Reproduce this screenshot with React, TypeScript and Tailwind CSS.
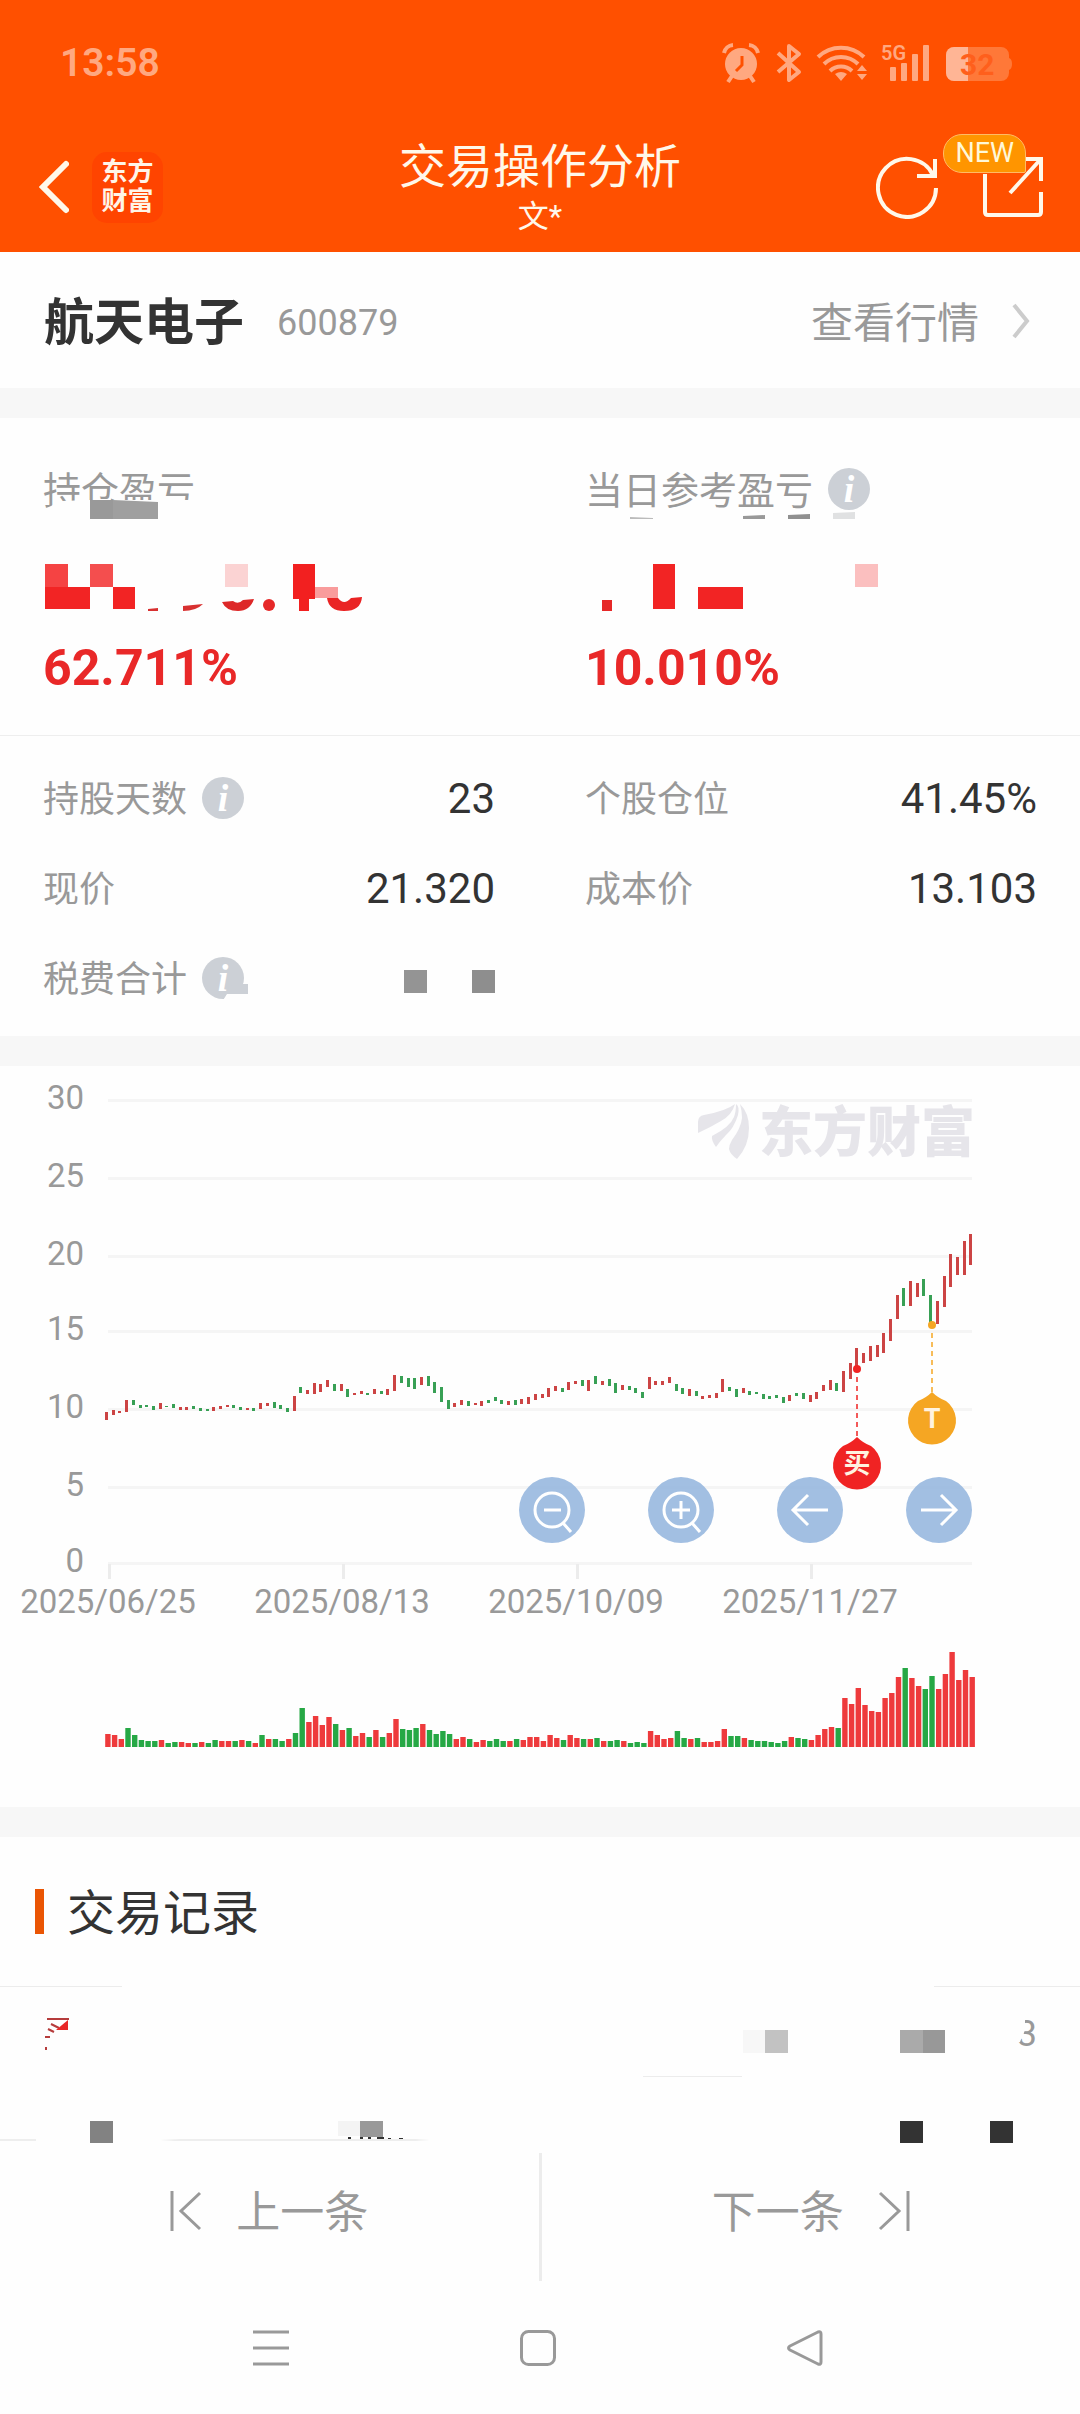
import { useState } from "react";
import type { ReactNode } from "react";

type Candle = [top: number, bottom: number, up: 0 | 1];
type Volume = [height: number, up: 0 | 1];

const CANDLES: Candle[] = [
  [346, 354, 1], [344, 349, 1], [345, 347, 1], [334, 346, 1], [334, 339, 0], [339, 342, 0], [339, 341, 0], [340, 344, 0], [337, 343, 1], [340, 341, 0],
  [338, 342, 0], [341, 344, 1], [341, 344, 1], [340, 343, 0], [342, 345, 0], [343, 345, 0], [341, 345, 1], [340, 343, 1], [339, 341, 1], [339, 342, 0],
  [341, 344, 0], [342, 344, 1], [342, 345, 0], [337, 343, 1], [337, 340, 1], [336, 342, 0], [339, 343, 0], [342, 346, 0], [330, 345, 1], [321, 327, 0],
  [324, 328, 1], [317, 328, 1], [318, 326, 1], [314, 321, 1], [318, 325, 0], [318, 325, 1], [323, 331, 0], [327, 329, 1], [325, 328, 1], [327, 329, 0],
  [323, 328, 1], [325, 328, 0], [323, 329, 1], [309, 325, 1], [310, 317, 0], [312, 321, 0], [312, 323, 0], [311, 319, 1], [310, 320, 0], [316, 327, 0],
  [321, 336, 0], [334, 343, 0], [337, 341, 1], [334, 339, 1], [335, 340, 0], [337, 339, 1], [335, 340, 1], [334, 337, 0], [331, 335, 0], [334, 338, 0],
  [335, 339, 1], [334, 339, 0], [333, 338, 1], [331, 338, 1], [328, 334, 1], [328, 332, 1], [322, 331, 1], [320, 325, 1], [322, 326, 0], [316, 324, 1],
  [315, 318, 1], [314, 320, 0], [314, 325, 1], [310, 318, 0], [315, 319, 1], [313, 320, 0], [317, 327, 0], [319, 324, 1], [320, 324, 0], [322, 327, 0],
  [326, 332, 0], [311, 323, 1], [315, 319, 1], [315, 319, 1], [311, 317, 1], [318, 325, 0], [322, 328, 0], [323, 330, 1], [325, 330, 0], [330, 333, 1],
  [329, 332, 1], [327, 332, 1], [313, 326, 1], [321, 325, 0], [323, 331, 0], [322, 327, 1], [325, 329, 0], [326, 328, 0], [328, 333, 0], [330, 333, 0],
  [329, 332, 0], [331, 337, 0], [329, 335, 1], [327, 330, 0], [327, 333, 0], [329, 336, 1], [326, 333, 1], [319, 325, 1], [314, 324, 1], [317, 325, 0],
  [305, 326, 1], [297, 313, 1], [282, 302, 1], [287, 297, 1], [280, 295, 1], [279, 291, 1], [267, 287, 1], [253, 275, 1], [229, 253, 1], [222, 240, 0],
  [215, 240, 1], [217, 231, 1], [213, 230, 0], [229, 256, 0], [235, 258, 1], [210, 241, 1], [188, 221, 1], [191, 209, 1], [175, 209, 1], [168, 199, 1],
];

const VOLUMES: Volume[] = [
  [13, 1], [12, 1], [8, 1], [19, 0], [12, 0], [7, 0], [6, 0], [6, 0], [7, 1], [4, 0],
  [5, 0], [5, 1], [4, 1], [4, 0], [5, 1], [4, 0], [7, 0], [6, 1], [6, 1], [6, 0],
  [7, 1], [6, 0], [4, 1], [12, 0], [8, 1], [8, 0], [6, 0], [8, 1], [14, 0], [39, 0],
  [25, 1], [31, 1], [22, 1], [30, 1], [23, 0], [17, 1], [19, 0], [11, 1], [14, 1], [10, 0],
  [17, 1], [10, 0], [14, 1], [28, 1], [18, 0], [17, 0], [19, 0], [23, 1], [17, 0], [13, 0],
  [16, 0], [13, 0], [8, 1], [10, 1], [8, 0], [5, 1], [7, 1], [6, 0], [8, 0], [6, 0],
  [6, 1], [8, 0], [7, 1], [10, 1], [10, 1], [6, 1], [12, 1], [9, 1], [7, 0], [12, 1],
  [9, 1], [8, 0], [8, 1], [9, 0], [6, 1], [6, 0], [7, 0], [6, 1], [4, 0], [5, 0],
  [4, 0], [16, 1], [12, 1], [8, 1], [9, 1], [16, 0], [9, 0], [8, 1], [9, 0], [5, 1],
  [5, 1], [6, 1], [18, 1], [11, 0], [11, 0], [9, 1], [7, 0], [6, 0], [6, 0], [5, 0],
  [4, 0], [6, 0], [10, 1], [9, 0], [8, 0], [7, 1], [12, 1], [18, 1], [20, 1], [19, 0],
  [49, 1], [43, 1], [59, 1], [42, 1], [36, 1], [35, 1], [49, 1], [54, 1], [70, 1], [79, 0],
  [69, 1], [61, 1], [58, 0], [71, 0], [58, 1], [73, 1], [95, 1], [67, 1], [77, 1], [70, 1],
];

const GRID = [
  { label: "30", y: 34 },
  { label: "25", y: 112 },
  { label: "20", y: 190 },
  { label: "15", y: 265 },
  { label: "10", y: 343 },
  { label: "5", y: 421 },
  { label: "0", y: 497 },
];

const DATES = [
  { label: "2025/06/25", x: 109 },
  { label: "2025/08/13", x: 343 },
  { label: "2025/10/09", x: 577 },
  { label: "2025/11/27", x: 811 },
];

const STEP = 6.7;

function StatusBar() {
  return (
    <div className="flex h-[126px] items-center justify-between pl-[60px] pr-[67px] text-[#ffa880]">
      <span className="text-[39px] font-semibold leading-[40px]">13:58</span>
      <svg viewBox="722 44 291 38" className="h-[38px] w-[291px] overflow-visible" fill="currentColor" aria-hidden="true">
        {/* alarm */}
        <circle cx="741" cy="64" r="16" />
        <path d="M724 53a10 10 0 0 1 9-8M758 53a10 10 0 0 0-9-8M732 76l-4 6M750 76l4 6" fill="none" stroke="currentColor" strokeWidth="4" />
        <path d="M742 56v9l-6 6" fill="none" stroke="#ff5000" strokeWidth="3" />
        {/* bluetooth */}
        <path d="M778 53l21 19-10 8V46l10 8-21 18" fill="none" stroke="currentColor" strokeWidth="4" strokeLinejoin="round" />
        {/* wifi */}
        <path d="M818 57a33 33 0 0 1 46 0M824 64a24 24 0 0 1 34 0M830 71a16 16 0 0 1 22 0" fill="none" stroke="currentColor" strokeWidth="4" />
        <path d="M835 74q6-4 12 0l-6 7zM857 71l5-6 5 6zM857 74l5 6 5-6z" />
        {/* signal */}
        <text x="881" y="60" className="text-[20px] font-semibold">5G</text>
        <rect x="890" y="67" width="6" height="14" rx="1" />
        <rect x="901" y="63" width="6" height="18" rx="1" />
        <rect x="912" y="54" width="6" height="27" rx="1" />
        <rect x="923" y="45" width="6" height="36" rx="1" />
        {/* battery */}
        <path d="M954 47h47a8 8 0 0 1 8 8v3q3 1 3 6t-3 6v3a8 8 0 0 1-8 8h-47a8 8 0 0 1-8-8V55a8 8 0 0 1 8-8z" fill="#ff7838" />
        <path d="M954 47h14v34h-14a8 8 0 0 1-8-8V55a8 8 0 0 1 8-8z" fill="#ffb595" />
        <text x="960" y="75" className="text-[30px] font-bold" fill="#ff5f1c">32</text>
      </svg>
    </div>
  );
}

function NavBar() {
  return (
    <div className="grid h-[126px] grid-cols-3 items-center pl-[36px] pr-[36px] text-white">
      <div className="flex items-center gap-[23px] pb-[4px] pl-[3px]">
        <button aria-label="返回">
          <svg viewBox="0 0 30 54" className="h-[54px] w-[30px]" fill="none" stroke="#fff8ea" strokeWidth="6" strokeLinecap="round">
            <path d="M27 4L4 27l23 23" />
          </svg>
        </button>
        <div className="flex size-[71px] flex-col items-center justify-center rounded-[15px] bg-[#ff4400] text-[26px] font-bold leading-[29px] text-[#fff5e8]">
          <span>东方</span>
          <span>财富</span>
        </div>
      </div>
      <div className="flex flex-col items-center text-[#fff8ea]">
        <h1 className="whitespace-nowrap text-[47px] leading-[56px]">交易操作分析</h1>
        <p className="text-[31px] leading-[44px]">文*</p>
      </div>
      <div className="flex items-center justify-end gap-[42px] pb-[4px]">
        <button aria-label="刷新">
          <svg viewBox="0 0 64 64" className="size-[64px]" fill="none" stroke="#fff8ea" strokeWidth="4">
            <path d="M60 33A29 29 0 1 1 57 20" />
            <path d="M59 4v17H41" />
          </svg>
        </button>
        <button aria-label="分享" className="relative">
          <svg viewBox="0 0 62 62" className="size-[62px]" fill="none" stroke="#fff8ea" strokeWidth="4">
            <path d="M3 18V56q0 3 3 3H56q3 0 3-3V36M30 3H59V25M58 4L28 37" />
          </svg>
          <span className="absolute -top-[22px] right-[18px] rounded-[19px] rounded-br-[2px] border border-[#ffbb66] bg-[#ff9500] px-[11px] text-[27px] leading-[37px] text-[#fff8d8]">
            NEW
          </span>
        </button>
      </div>
    </div>
  );
}

function StockHeader() {
  return (
    <section className="flex h-[136px] items-center pl-[44px] pr-[50px] pt-[6px]">
      <h2 className="text-[50px] font-bold text-[#333]">航天电子</h2>
      <span className="ml-[33px] text-[36px] text-[#999]">600879</span>
      <a href="#quote" className="ml-auto flex items-center gap-[33px] text-[42px] text-[#999]">
        查看行情
        <svg viewBox="0 0 18 36" className="mb-[4px] h-[36px] w-[18px]" fill="none" stroke="#ccc" strokeWidth="4">
          <path d="M2 2l13 16L2 34" />
        </svg>
      </a>
    </section>
  );
}

function Divider() {
  return <div className="h-[30px] bg-[#f7f7f7]" />;
}

function InfoButton() {
  return (
    <button
      aria-label="说明"
      className="flex size-[42px] items-center justify-center rounded-full bg-[#ccd0d6] font-['Liberation_Serif',serif] text-[38px] font-bold italic leading-[38px] text-white"
    >
      i
    </button>
  );
}

// Blocks that hide the private amounts
function ProfitMask() {
  return (
    <svg viewBox="0 0 1080 317" className="pointer-events-none absolute inset-0 w-full" aria-hidden="true">
      <path d="M40 93l22-10 28-1h110v4h10v16H40z" fill="#fefefe" />
      <rect x="90" y="82" width="23" height="19" fill="#999" />
      <path d="M113 82l45 2v17h-45z" fill="#9f9f9f" />
      <path d="M630 99l23 1v1h-23z" fill="#bbb" />
      <path d="M743 98l22-1v4h-22z" fill="#999" />
      <path d="M788 97l22-1v5h-22z" fill="#909090" />
      <path d="M833 95l22-1v7h-22z" fill="#e0e1e2" />

      <rect x="45" y="146" width="23" height="23" fill="#f54343" />
      <rect x="90" y="146" width="23" height="23" fill="#f44e4e" />
      <path d="M45 169h45v22H45zM113 169h22v22h-22z" fill="#f22424" />
      <rect x="225" y="146" width="23" height="23" fill="#fbd3d3" />
      <path d="M148 191l10-1v3h-10zM183 188l20-2q-7 7-20 7z" fill="#d83030" />
      <path d="M222 184l11-1q5 4 10-1l11-1q-4 12-16 12t-16-9z" fill="#dd2828" />
      <circle cx="269" cy="187" r="6" fill="#e62828" />
      <path d="M293 146h22v35h-6v12h-10v-12h-6z" fill="#f22020" />
      <rect x="315" y="169" width="23" height="11" fill="#f99c9c" />
      <path d="M327 180h11q6 8 13 0l11-1q-1 14-18 14-15 0-17-13z" fill="#ea2424" />

      <rect x="602" y="182" width="10" height="11" fill="#e62828" />
      <path d="M653 146h22v45h-22zM698 169h45v22h-45z" fill="#f22424" />
      <rect x="855" y="146" width="23" height="23" fill="#fbbfbf" />
    </svg>
  );
}

function Profit({ label, percent, info }: { label: string; percent: string; info?: boolean }) {
  return (
    <div>
      <div className="flex h-[56px] items-center gap-[15px] text-[38px] text-[#999]">
        <span className="pt-[4px]">{label}</span>
        {info && <InfoButton />}
      </div>
      <div className="h-[118px]" />
      <div className="text-[50px] font-bold leading-[66px] text-[#e92828]">{percent}</div>
    </div>
  );
}

function ProfitSection() {
  return (
    <section className="relative grid h-[317px] grid-cols-2 gap-x-[90px] px-[43px] pt-[43px]">
      <Profit label="持仓盈亏" percent="62.711%" />
      <Profit label="当日参考盈亏" percent="10.010%" info />
      <ProfitMask />
    </section>
  );
}

function DetailRow({ label, info, children }: { label: string; info?: boolean; children: ReactNode }) {
  return (
    <div className="flex h-[90px] items-center justify-between">
      <dt className="flex items-center gap-[15px] text-[36px] text-[#999]">
        <span className="pt-[4px]">{label}</span>
        {info && <InfoButton />}
      </dt>
      <dd className="text-[42px] text-[#333]">{children}</dd>
    </div>
  );
}

function Details() {
  return (
    <dl className="relative grid grid-cols-2 gap-x-[90px] border-t border-[#eee] px-[43px] pb-[13px] pt-[17px]">
      <DetailRow label="持股天数" info>23</DetailRow>
      <DetailRow label="个股仓位">41.45%</DetailRow>
      <DetailRow label="现价">21.320</DetailRow>
      <DetailRow label="成本价">13.103</DetailRow>
      <DetailRow label="税费合计" info>
        <div className="flex gap-[45px] pt-[6px]">
          <span className="size-[23px] bg-[#949494]" />
          <span className="size-[23px] bg-[#8e8e8e]" />
        </div>
      </DetailRow>
      <svg viewBox="0 0 1080 301" className="pointer-events-none absolute inset-0 w-full" aria-hidden="true">
        <path d="M228 257h20v10h-24l-2 0z" fill="#fefefe" />
        <path d="M232 248h16v10h-24z" fill="#ccd0d6" />
        <path d="M227 258h21v8h-26z" fill="#fefefe" />
      </svg>
    </dl>
  );
}

function Pin({ x, dotY, tipY, color, label }: { x: number; dotY: number; tipY: number; color: string; label: string }) {
  return (
    <g>
      <circle cx={x} cy={dotY} r="4" fill={color} />
      <line x1={x} x2={x} y1={dotY + 8} y2={tipY} stroke={color} strokeWidth="1.5" strokeDasharray="5 4" />
      <path d={`M${x} ${tipY}q6 6 14 9a24 24 0 1 1-28 0q8-3 14-9z`} fill={color} />
      <text x={x} y={tipY + 36} textAnchor="middle" fill="#fff3e0" className="text-[27px] font-bold">
        {label}
      </text>
    </g>
  );
}

function ChartButton({ label, onClick, children }: { label: string; onClick?: () => void; children: ReactNode }) {
  return (
    <button aria-label={label} onClick={onClick} className="size-[66px] rounded-full bg-[#98b8df]/90">
      <svg viewBox="0 0 66 66" className="size-full" fill="none" stroke="#fff" strokeWidth="3">
        {children}
      </svg>
    </button>
  );
}

function Chart() {
  const [shown, setShown] = useState(CANDLES.length);

  return (
    <section className="relative">
      <svg viewBox="0 0 1080 741" className="w-full" role="img" aria-label="K线图">
        {GRID.map((line) => (
          <g key={line.label}>
            <rect x="108" y={line.y - 1} width="864" height="3" fill="#f5f5f5" />
            <text x="84" y={line.y + 9} textAnchor="end" fill="#999" className="text-[33px]">
              {line.label}
            </text>
          </g>
        ))}
        {DATES.map((date) => (
          <g key={date.label}>
            <rect x={date.x - 1} y="498" width="3" height="15" fill="#ececec" />
            <text x={date.x - 1} y="547" textAnchor="middle" fill="#999" className="text-[33px]">
              {date.label}
            </text>
          </g>
        ))}

        <g fill="#e6e5ea">
          <path d="M698 56q0-6 6-7 22-4 31-11-3 11-14 17-10 6-23 12z" />
          <path d="M736 38q4 3 2 11-4 13-12 20-6 6-10 12-5-7-4-11 18-9 22-19 2-5 2-13z" />
          <path d="M740 38q9 9 9 24 0 18-12 31-7-5-8-10 0-4 3-9 9-12 10-22 0-7-2-14z" />
          <text x="759" y="86" className="text-[54px] font-black">东方财富</text>
        </g>

        {CANDLES.slice(-shown).map(([top, bottom, up], i) => (
          <rect key={i} x={105 + Math.round(i * STEP)} y={top} width="3" height={bottom - top} fill={up ? "#cc4444" : "#38a055"} />
        ))}
        {VOLUMES.slice(-shown).map(([height, up], i) => (
          <rect key={i} x={105.2 + i * STEP} y={681 - height} width="5.4" height={height} fill={up ? "#ee3a3c" : "#26a845"} />
        ))}

        <Pin x={857} dotY={303} tipY={371} color="#f02323" label="买" />
        <Pin x={932} dotY={259} tipY={326} color="#f5a623" label="T" />
      </svg>

      <div className="absolute right-[10%] top-[411px] flex gap-[63px]">
        <ChartButton label="缩小" onClick={() => setShown(CANDLES.length)}>
          <circle cx="33" cy="33" r="17" />
          <path d="M25 33h17M44 46l8 9" />
        </ChartButton>
        <ChartButton label="放大" onClick={() => setShown(Math.max(30, shown - 20))}>
          <circle cx="33" cy="33" r="17" />
          <path d="M24 33h18M33 24v18M44 46l8 9" />
        </ChartButton>
        <ChartButton label="向左">
          <path d="M51 33H17M31 18L16 33l15 15" />
        </ChartButton>
        <ChartButton label="向右">
          <path d="M15 33h34M35 18l15 15-15 15" />
        </ChartButton>
      </div>
    </section>
  );
}

function Records() {
  return (
    <section>
      <div className="flex h-[149px] items-center gap-[23px] pl-[35px]">
        <span className="h-[45px] w-[9px] bg-[#ea5504]" />
        <h2 className="pt-[4px] text-[48px] text-[#333]">交易记录</h2>
      </div>
      <div className="relative h-[156px]">
        <div className="flex justify-end px-[43px] pt-[23px] text-[36px] leading-[50px] text-[#999]">3</div>
        <svg viewBox="0 0 1080 156" className="pointer-events-none absolute inset-0 w-full overflow-visible" aria-hidden="true">
          <path d="M0 0h122v1H0zM934 0h146v1H934zM643 90h99v1h-99z" fill="#ececec" />
          <path d="M0 153h36v2H0zM160 154l20-1h235l15 1-15 1H175z" fill="#eee" />
          <path d="M1012 28h13v16l-5 12h-8z" fill="#fefefe" />

          <path d="M47 33h22M51 38l8 4M48 43l6 3M45 51h5M46 61v3" fill="none" stroke="#b63c3c" strokeWidth="2" />
          <path d="M68 34v10H56z" fill="#e82828" />

          <rect x="743" y="44" width="22" height="23" fill="#f7f7f7" />
          <rect x="765" y="44" width="23" height="23" fill="#c2c2c2" />
          <rect x="900" y="44" width="23" height="23" fill="#aaa" />
          <rect x="923" y="44" width="22" height="23" fill="#989898" />

          <rect x="90" y="135" width="23" height="22" fill="#828282" />
          <rect x="338" y="135" width="22" height="15" fill="#f4f4f4" />
          <rect x="360" y="135" width="23" height="16" fill="#999" />
          <path d="M348 151h3v2h-3zM360 151h3v2h-3zM368 151h3v2h-3zM377 151h7v2h-7zM388 152h3v1h-3zM399 152h4v1h-4z" fill="#333" />
          <path d="M900 135h23v22h-23zM990 135h23v22h-23z" fill="#333" />
        </svg>
      </div>
    </section>
  );
}

function Pager() {
  return (
    <div className="flex h-[150px] items-center text-[44px] text-[#999]">
      <button className="flex flex-1 items-center justify-center gap-[34px] pb-[12px]">
        <svg viewBox="0 0 32 42" className="h-[42px] w-[32px]" fill="none" stroke="#999" strokeWidth="3">
          <path d="M2 1v40M30 3L11 21l19 18" />
        </svg>
        <span className="pt-[4px]">上一条</span>
      </button>
      <span className="h-[128px] w-[3px] bg-[#ececec]" />
      <button className="flex flex-1 items-center justify-center gap-[34px] pb-[12px]">
        <span className="pt-[4px]">下一条</span>
        <svg viewBox="0 0 32 42" className="h-[42px] w-[32px]" fill="none" stroke="#999" strokeWidth="3">
          <path d="M30 1v40M2 3l19 18L2 39" />
        </svg>
      </button>
    </div>
  );
}

function SystemNav() {
  return (
    <nav className="flex h-[122px] items-center justify-center gap-[231px] pb-[10px] pr-[4px]">
      <button aria-label="最近任务">
        <svg viewBox="0 0 36 36" className="size-[36px]" stroke="#999" strokeWidth="3">
          <path d="M0 2h36M0 18h36M0 34h36" />
        </svg>
      </button>
      <button aria-label="主屏幕">
        <svg viewBox="0 0 36 36" className="size-[36px]" fill="none" stroke="#999" strokeWidth="3">
          <rect x="1.5" y="1.5" width="33" height="33" rx="7" />
        </svg>
      </button>
      <button aria-label="返回上级">
        <svg viewBox="0 0 36 36" className="size-[36px]" fill="none" stroke="#999" strokeWidth="3" strokeLinejoin="round">
          <path d="M31 2q3-1 3 2v28q0 3-3 2L3 20q-3-2 0-4z" />
        </svg>
      </button>
    </nav>
  );
}

export default function App() {
  return (
    <div className="bg-[#fefefe] font-[Roboto,'Noto_Sans_CJK_SC',sans-serif]">
      <header className="bg-[#ff5000]">
        <StatusBar />
        <NavBar />
      </header>
      <main>
        <StockHeader />
        <Divider />
        <ProfitSection />
        <Details />
        <Divider />
        <Chart />
        <Divider />
        <Records />
      </main>
      <footer>
        <Pager />
        <SystemNav />
      </footer>
    </div>
  );
}
